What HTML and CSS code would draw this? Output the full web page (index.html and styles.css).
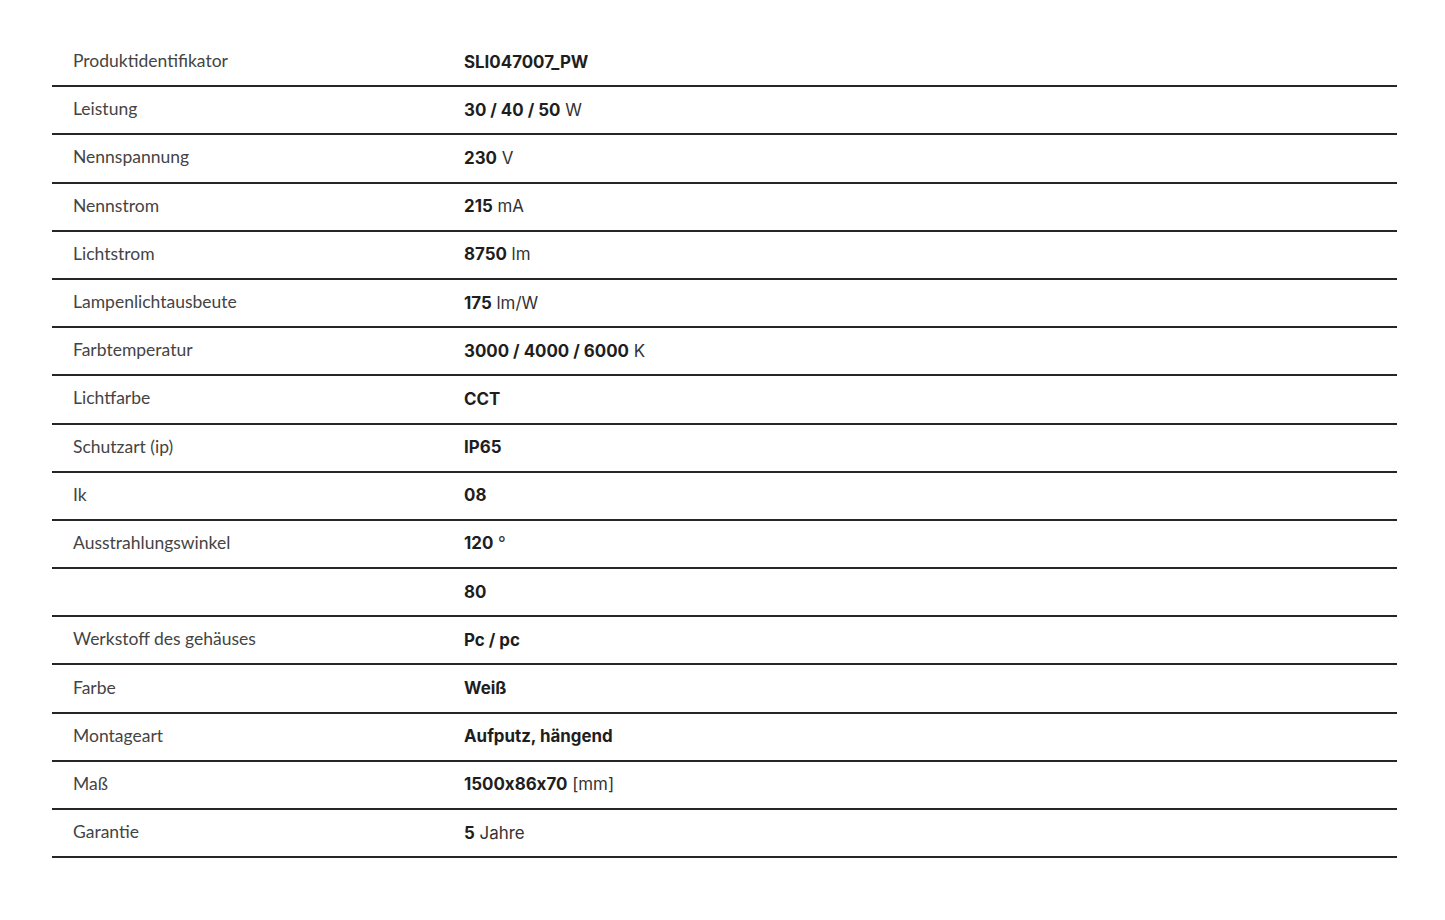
FILE: index.html
```html
<!DOCTYPE html>
<html lang="de">
<head>
<meta charset="utf-8">
<title>Produktdaten</title>
<link rel="stylesheet" href="styles.css">
</head>
<body>
<div class="specs">
  <div class="row"><div class="label">Produktidentifikator</div><div class="value"><b>SLI047007_PW</b></div></div>
  <div class="row"><div class="label">Leistung</div><div class="value"><b>30 / 40 / 50</b> W</div></div>
  <div class="row"><div class="label">Nennspannung</div><div class="value"><b>230</b> V</div></div>
  <div class="row"><div class="label">Nennstrom</div><div class="value"><b>215</b> mA</div></div>
  <div class="row"><div class="label">Lichtstrom</div><div class="value"><b>8750</b> lm</div></div>
  <div class="row"><div class="label">Lampenlichtausbeute</div><div class="value"><b>175</b> lm/W</div></div>
  <div class="row"><div class="label">Farbtemperatur</div><div class="value"><b>3000 / 4000 / 6000</b> K</div></div>
  <div class="row"><div class="label">Lichtfarbe</div><div class="value"><b>CCT</b></div></div>
  <div class="row"><div class="label">Schutzart (ip)</div><div class="value"><b>IP65</b></div></div>
  <div class="row"><div class="label">Ik</div><div class="value"><b>08</b></div></div>
  <div class="row"><div class="label">Ausstrahlungswinkel</div><div class="value"><b>120</b> °</div></div>
  <div class="row"><div class="label"></div><div class="value"><b>80</b></div></div>
  <div class="row"><div class="label">Werkstoff des gehäuses</div><div class="value"><b>Pc / pc</b></div></div>
  <div class="row"><div class="label">Farbe</div><div class="value"><b>Weiß</b></div></div>
  <div class="row"><div class="label">Montageart</div><div class="value"><b>Aufputz, hängend</b></div></div>
  <div class="row"><div class="label">Maß</div><div class="value"><b>1500x86x70</b> [mm]</div></div>
  <div class="row"><div class="label">Garantie</div><div class="value"><b>5</b> Jahre</div></div>
</div>
</body>
</html>
```

FILE: styles.css
```css
html, body {
  margin: 0;
  padding: 0;
  background: #ffffff;
}

body {
  font-family: "Lato", "Open Sans", "Liberation Sans", sans-serif;
  font-size: 17.5px;
  color: #3f3f3f;
}

.specs {
  margin: 39px 48px 0 52px;
  width: 1345px;
}

.row {
  display: grid;
  grid-template-columns: 412px 1fr;
  align-items: center;
  height: 48.2px;
  box-sizing: border-box;
  border-bottom: 2px solid #262626;
  padding-bottom: 3px;
}

.label {
  padding-left: 21px;
  color: #444444;
}

.value {
  color: #333333;
  font-family: "Inter", "Lato", sans-serif;
  font-size: 16.9px;
  font-feature-settings: "calt" 0;
  padding-top: 2px;
}

.value b {
  font-weight: 700;
  color: #1e1e1e;
}
```
